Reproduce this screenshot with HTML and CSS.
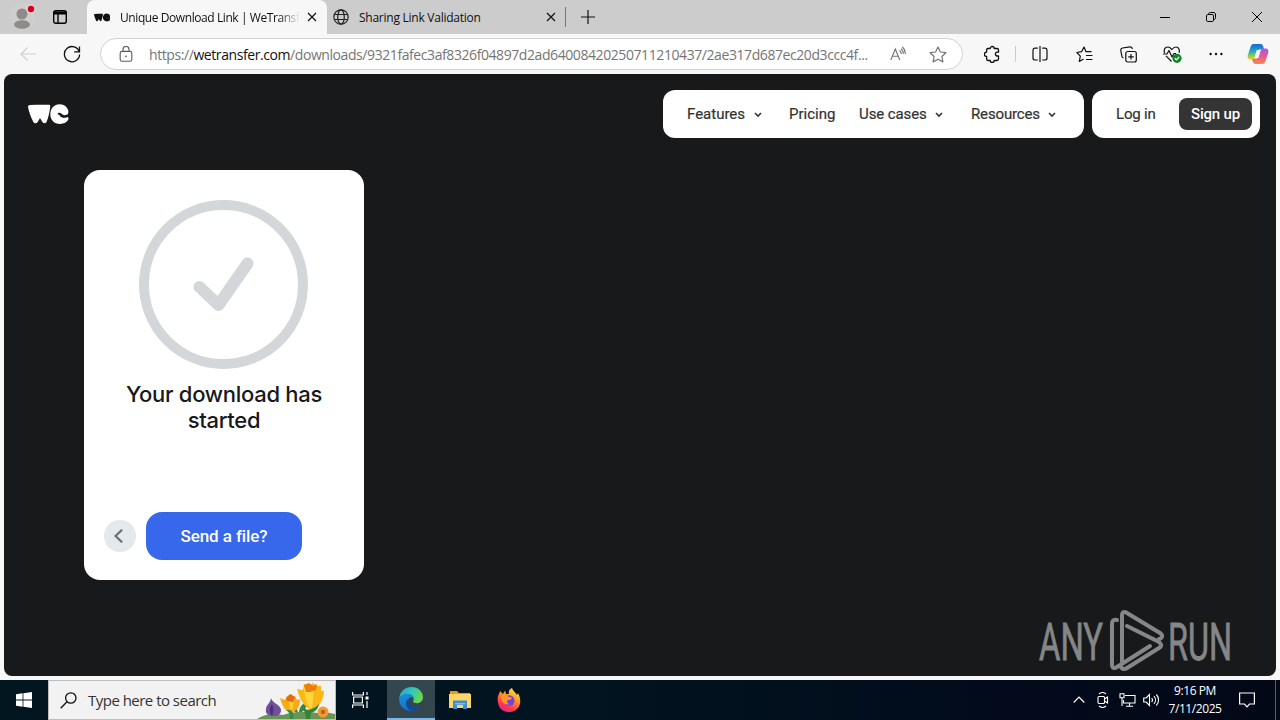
FILE: index.html
```html
<!DOCTYPE html>
<html lang="en">
<head>
    <meta charset="UTF-8">
    <meta name="viewport" content="width=device-width, initial-scale=1.0">
    <title>Unique Download Link | WeTransfer</title>
    <link rel="stylesheet" href="styles.css">
</head>
<body>
    <div class="tabs">
        <div class="profile">
            <svg width="28" height="28" viewBox="0 0 28 28"><circle cx="14" cy="13" r="13" fill="#d0cecc"/><circle cx="14" cy="11" r="5.500" fill="#8e8b88"/><ellipse cx="14" cy="21.500" rx="8" ry="4.300" fill="#8e8b88"/><circle cx="23" cy="6" r="4.500" fill="#e4d4d4"/><circle cx="23" cy="6" r="3.200" fill="#d0021b"/></svg>
        </div>
        <div class="workspace">
            <svg width="16" height="16" viewBox="0 0 16 16" fill="none" stroke="#000" stroke-width="1.400"><rect x="1.700" y="1.700" width="12.600" height="12.600" rx="2"/><path d="M2 4h12" stroke-width="3"/><path d="M6 5v9"/></svg>
        </div>
        <div class="tab active">
            <svg class="favicon" width="16" height="9" viewBox="0 0 40 20" fill="#111"><use href="#we"/></svg>
            <span class="title fade">Unique Download Link | WeTransf</span>
            <svg class="close" width="10" height="10" viewBox="0 0 10 10" stroke="#111" stroke-width="1.200"><path d="M1 1l8 8M9 1L1 9"/></svg>
        </div>
        <div class="tab">
            <svg class="globe" width="16" height="16" viewBox="0 0 16 16" fill="none" stroke="#222" stroke-width="1.200"><circle cx="8" cy="8" r="7.200"/><ellipse cx="8" cy="8" rx="3.300" ry="7.200"/><path d="M1.500 5.500h13M1.500 10.500h13"/></svg>
            <span class="title">Sharing Link Validation</span>
            <svg class="close" width="10" height="10" viewBox="0 0 10 10" stroke="#111" stroke-width="1.200"><path d="M1 1l8 8M9 1L1 9"/></svg>
        </div>
        <div class="newtab">
            <svg width="14" height="14" viewBox="0 0 14 14" stroke="#111" stroke-width="1.200"><path d="M7 0v14M0 7h14"/></svg>
        </div>
        <div class="winbtns">
            <div><svg width="10" height="10" viewBox="0 0 10 10" stroke="#000"><path d="M0 5.500h10"/></svg></div>
            <div><svg width="10" height="10" viewBox="0 0 10 10" fill="none" stroke="#000"><rect x=".5" y="2.500" width="7" height="7" rx="1.300"/><path d="M2.500 2.500C2.500 1 3 .5 4.500 .5H7C9 .5 9.500 1 9.500 3v2.500c0 1.500-.5 2-2 2"/></svg></div>
            <div><svg width="10" height="10" viewBox="0 0 10 10" stroke="#000"><path d="M0 0l10 10M10 0L0 10"/></svg></div>
        </div>
    </div>

    <div class="toolbar">
        <div class="tool"><svg width="16" height="14" viewBox="0 0 16 14" fill="none" stroke="#cfcfcf" stroke-width="1.200"><path d="M16 7H1M7.500 .5L1 7l6.500 6.500"/></svg></div>
        <div class="tool"><svg width="18" height="18" viewBox="0 0 18 18" fill="none" stroke="#111" stroke-width="1.300"><path d="M16.300 7A7.600 7.600 0 1 0 16.600 9.500M16.500 1.500v5.300h-5.300"/></svg></div>
        <div class="address">
            <svg class="lock" width="14" height="16" viewBox="0 0 14 16" fill="none" stroke="#5b5b5b" stroke-width="1.100"><rect x="1.200" y="5.400" width="11.600" height="9.800" rx="1.800"/><path d="M4 5.400V3.500a3 3 0 0 1 6 0v1.900"/><circle cx="7" cy="10.300" r=".6" fill="#5b5b5b" stroke-width=".6"/></svg>
            <span class="url">https://<b>wetransfer.com</b>/downloads/9321fafec3af8326f04897d2ad64008420250711210437/2ae317d687ec20d3ccc4f...</span>
            <svg class="read" width="16" height="16" viewBox="0 0 16 16" fill="none" stroke="#747474" stroke-width="1.100"><path d="M.8 14L5.300 3l4.500 11M2.300 10.300h6M9.500 4.500c1.300 1 1.800 2 1.800 3.500M11 2.700c1.600 1.300 2.400 3 2.300 5.300M12.300 1c2 1.600 3.100 4 3 7"/></svg>
            <svg class="star" width="18" height="17" viewBox="0 0 18 17" fill="none" stroke="#747474" stroke-width="1.200" stroke-linejoin="round"><path d="M9 1l2.400 5 5.500.700-4 3.800 1 5.400L9 13.300l-4.900 2.600 1-5.400-4-3.800 5.500-.7z"/></svg>
        </div>
        <div class="tool ext"><svg width="16" height="18" viewBox="0 0 16 18" fill="none" stroke="#111" stroke-width="1.300" stroke-linejoin="round"><path d="M4 3.500h2.200a2 2 0 0 1 4 0H13a1.500 1.500 0 0 1 1.500 1.500v2.200h-1.200a1.900 1.900 0 0 0 0 3.800h1.200V14a1.500 1.500 0 0 1-1.500 1.500h-2.800a2 2 0 0 1-4 0H4A1.500 1.500 0 0 1 2.600 14v-2.500a2.200 2.200 0 0 1 0-4.400V5A1.500 1.500 0 0 1 4 3.500z"/></svg></div>
        <div class="line"></div>
        <div class="tool"><svg width="16" height="16" viewBox="0 0 16 16" fill="none" stroke="#111" stroke-width="1.200"><path d="M5.800 2.100H3A2 2 0 0 0 1 4v8a2 2 0 0 0 2 2h2.800M10.200 2.100H13A2 2 0 0 1 15 4v8a2 2 0 0 1-2 2h-2.800M8 0v16"/></svg></div>
        <div class="tool"><svg width="17" height="17" viewBox="0 0 17 17" fill="none" stroke="#111" stroke-width="1.200" stroke-linejoin="round"><path d="M15.500 5.700H10L8 1 5.600 5.700.8 6.500l3.500 3.600-1 5.400L7.500 13M10 9.500h6.500M10 13.500h6.500"/></svg></div>
        <div class="tool"><svg width="17" height="17" viewBox="0 0 17 17" fill="none" stroke="#111" stroke-width="1.200"><rect x="5.800" y="5.500" width="10.500" height="10.500" rx="2"/><path d="M11 8v5.500M8.300 10.800h5.500M3.500 12C2.300 11.800 2 11.200 1.800 10L.8 4.500C.6 3 1.200 2.200 2.500 2L10 .8c1.500-.2 2.100.4 2.400 2.200"/></svg></div>
        <div class="tool health"><svg width="19" height="17" viewBox="0 0 19 17" fill="none" stroke="#111" stroke-width="1.200" stroke-linejoin="round"><path d="M1.600 7C.5 4.500 1.500 1 4.800 1 7 1 8 2.500 8.800 3.500 9.600 2.500 11 1 13 1c3 0 4 3.300 3 5.800M3 9.800l5.500 5.700M0 8h4l2-3.500L9 11l2-3.500h2"/><circle cx="14" cy="12.300" r="4.600" fill="#15852c" stroke="none"/><path d="M11.800 12.300l1.600 1.500 2.800-3" stroke="#fff"/></svg></div>
        <div class="tool"><svg width="14" height="4" viewBox="0 0 14 4" fill="#111"><circle cx="1.600" cy="2" r="1.200"/><circle cx="7" cy="2" r="1.200"/><circle cx="12.400" cy="2" r="1.200"/></svg></div>
        <div class="copilot">
            <svg width="22" height="20" viewBox="0 0 22 20">
                <defs>
                    <linearGradient id="cpA" x1="0" y1="0" x2="0" y2="1"><stop offset="0" stop-color="#1769d8"/><stop offset=".45" stop-color="#21a4c9"/><stop offset=".75" stop-color="#8fca4c"/><stop offset="1" stop-color="#f2cf2d"/></linearGradient>
                    <linearGradient id="cpB" x1="0" y1="0" x2="0" y2="1"><stop offset="0" stop-color="#a35be0"/><stop offset=".5" stop-color="#e4589f"/><stop offset="1" stop-color="#fb8a3c"/></linearGradient>
                </defs>
                <path d="M6.500 0h7c2 0 2.500 1.500 3 3.500l.5 1.500h-3c-2 0-2.500 1-3 2.500l-2 6C8.500 15 7.500 15.500 6 15.500H3.500C1 15.500 0 13.500.8 11L3.500 3C4.200 1 5 0 6.500 0z" fill="url(#cpA)"/>
                <path d="M15.500 20h-7c-2 0-2.500-1.500-3-3.500L5 15h3c2 0 2.500-1 3-2.500l2-6c.5-1.500 1.500-2 3-2h2.500C21 4.500 22 6.500 21.200 9l-2.700 8c-.7 2-1.500 3-3 3z" fill="url(#cpB)"/>
                <path d="M9.700 6h4.200l-2.500 8H7.300z" fill="#f7f7f7"/>
            </svg>
        </div>
    </div>

    <div class="frame">
        <div class="page">
            <header>
                <svg class="logo" width="41" height="20" viewBox="0 0 41 20" fill="#fff">
                    <g id="we">
                        <path d="M2 1C9 .6 15 .6 20.800.7c1.300 0 1.700.9 1.400 2.200-.6 5.200-1.800 10.500-3.600 14.800-.8 1.900-3.400 1.900-4.400.1L12 14l-2.300 4c-.9 1.600-3.400 1.600-4.300-.1C3 13.200 1 8 .1 3.400-.2 1.900.6 1.100 2 1z"/>
                        <path d="M31.500.2c5 0 8.900 3.500 8.900 7.600 0 3-1.800 4.900-4.500 4.900-2 0-3.300-.9-4-2.300-.3 2 1.400 3.100 3.700 2.900 1.300-.1 2.700-.6 3.600-.4 1.600.3 1.700 2 .7 3.400-1.500 2.200-4.200 3.600-7.800 3.600-6 0-9.800-3.900-9.800-9.700 0-5.800 3.900-10 9.200-10z"/>
                        <path d="M29.500 10c.6-1.400 2.600-1.700 3.900-.5 1.600 2 3.600 2.300 6 .7l.8 2c-2.400 2-5.300 2-7.400 0-1-.9-2.200-1.500-3.300-2.200z" class="eye"/>
                    </g>
                </svg>
                <nav>
                    <a class="features">Features <svg width="8" height="6" viewBox="0 0 8 6"><path d="M1 1l3 3 3-3"/></svg></a>
                    <a class="pricing">Pricing</a>
                    <a class="cases">Use cases <svg width="8" height="6" viewBox="0 0 8 6"><path d="M1 1l3 3 3-3"/></svg></a>
                    <a class="resources">Resources <svg width="8" height="6" viewBox="0 0 8 6"><path d="M1 1l3 3 3-3"/></svg></a>
                </nav>
                <div class="account">
                    <a class="login">Log in</a>
                    <a class="signup">Sign up</a>
                </div>
            </header>

            <div class="card">
                <svg class="done" width="170" height="170" viewBox="0 0 170 170" fill="none" stroke="#d4d7da"><circle cx="84.500" cy="84.500" r="79.500" stroke-width="10"/><path d="M60.500 87L79.500 105L108.500 63.500" stroke-width="12" stroke-linecap="round" stroke-linejoin="round"/></svg>
                <h2>Your download has<br>started</h2>
                <div class="actions">
                    <button class="back"><svg width="9" height="14" viewBox="0 0 9 14" fill="none" stroke="#6a6d70" stroke-width="2.200" stroke-linecap="round"><path d="M7.500 1.300L1.500 7l6 5.700"/></svg></button>
                    <button class="send">Send a file?</button>
                </div>
            </div>
        </div>
    </div>

    <svg class="watermark" width="210" height="66" viewBox="0 0 210 66">
        <text x="2" y="53" textLength="64" lengthAdjust="spacingAndGlyphs">ANY</text>
        <text x="131" y="53" textLength="64" lengthAdjust="spacingAndGlyphs">RUN</text>
        <path d="M80 13c-4-1-5 1-5 5v39c0 4 2 5 5 3l33-21M85 55V9c0-4 2-5 5-3l33 20c3 2 3 5-1 6M90 19l32 16c3 3 3 4 0 6L90 61c-3 2-5 1-6-1"/>
    </svg>

    <div class="taskbar">
        <div class="start"><svg width="16" height="16" viewBox="0 0 16 16" fill="#fff"><path d="M0 2.200L6.600 1.300v6.200H0zM7.400 1.200L16 0v7.500H7.400zM0 8.400h6.600v6.300L0 13.800zM7.400 8.400H16V16l-8.600-1.200z"/></svg></div>
        <div class="search">
            <svg class="glass" width="17" height="17" viewBox="0 0 17 17" fill="none" stroke="#111" stroke-width="1.300"><circle cx="10.800" cy="6" r="5.200"/><path d="M7 9.800L.7 16.300"/></svg>
            <span>Type here to search</span>
            <svg class="flowers" width="80" height="38" viewBox="0 0 80 38">
                <path d="M2 38C10 33 18 32 28 34c12-4 26-3 34-2 8-1 14 0 18 1v5z" fill="#6a9357"/>
                <path d="M43 32C42 25 38 21 34 20c1 8 4 11 9 12zM44 32c0-6 3-9 8-11 0 6-3 10-8 11z" fill="#3c8a3c"/>
                <path d="M16 17c1 5 10 7 10 12 0 5-4 6-8 6s-8-2-7-7c0-4 4-5 5-11z" fill="#71509b"/><path d="M17 23c2 4 2 8 0 12-3-3-3-8 0-12z" fill="#4b3277"/>
                <path d="M25 17l5 2 2-4 4 2 4-2 2 4 3-1c0 7-3 13-9 13s-9-7-11-14z" fill="#f7a916"/><path d="M33 15l4-2 2 4-2 13c-3-4-4-9-4-15z" fill="#ffcf38"/><path d="M31 17l4-4 5 3-2 5-6-1z" fill="#e26b12"/>
                <path d="M35 29c3 1 4 4 3 9h-3c0-4 0-6-4-9z" fill="#3c8a3c"/>
                <path d="M42 8l6 1 1-6 5 2 4-3 4 3 4 0 0 5 3 0c0 8-5 17-11 19-8-1-13-10-16-21z" fill="#fab816"/><path d="M49 7l4-4 6 6-2 20c-6-5-7-13-8-22z" fill="#ffd43d"/><path d="M49 4l5-2 4 3 4-2-1 6-6 2-4 0z" fill="#ed7c12"/>
                <path d="M46 24c4 4 6 6 10 4 4-1 6-3 8-5-1 6-5 8-8 9l-1 6h-4c0-6-2-8-5-14z" fill="#338438"/>
                <circle cx="68" cy="31" r="5.500" fill="#f39b2c"/><circle cx="68" cy="31" r="2.200" fill="#bd5f28"/>
            </svg>
        </div>
        <div class="app"><svg width="17" height="16" viewBox="0 0 17 16" fill="none" stroke="#fff" stroke-width="1.200"><path d="M.6 0v3h10.800V0M.6 16v-3h10.800v3M1.600 5h8.800v6H1.600zM15 0v3M15 9v7"/><path d="M13.500 4.500h3v3h-3z" fill="#fff" stroke="none"/></svg></div>
        <div class="app edge">
            <svg width="24" height="24" viewBox="0 0 24 24">
                <defs>
                    <linearGradient id="edgeA" x1="0" y1="0" x2="1" y2=".4"><stop offset="0" stop-color="#279fd3"/><stop offset=".55" stop-color="#31c6ba"/><stop offset="1" stop-color="#66d84d"/></linearGradient>
                    <linearGradient id="edgeB" x1="0" y1="0" x2=".7" y2="1"><stop offset="0" stop-color="#1a93dc"/><stop offset="1" stop-color="#1169c3"/></linearGradient>
                </defs>
                <path d="M.2 11C1 4.500 6 0 12.300 0 19.500 0 24 5 24 10.200c0 3.600-2.800 6-6.200 6-3 0-4.500-1.200-3.400-2.600 1.200-2-.5-5.600-4-5.600C5.500 7 2 8.500.2 11z" fill="url(#edgeA)"/>
                <path d="M.1 11.500C1.500 8.500 5 6.500 8.500 6.700c3.500 0 6 2 6.300 4.500-1.200-1.500-4-1.500-5.300.8-1.800 3.700 1 8 5.300 8.300 2.500.2 4.700-.5 6.800-1.700C19.500 22 16 24 12 24 5 24-.4 18.300.1 11.500z" fill="url(#edgeB)"/>
                <path d="M9.300 12c-4 2.500-2.500 9 2.500 11.800 4 .2 7.500-1.500 9.800-5.200-6 3.400-12.700.9-12.300-6.600z" fill="#124a9b"/>
            </svg>
        </div>
        <div class="app"><svg width="22" height="20" viewBox="0 0 22 20"><path d="M1 1h7l2 2h11v4H1z" fill="#e39a18"/><path d="M0 4h22v14H0z" fill="#fbd568"/><path d="M4 10.500h14V19h-4v-4H8v4H4z" fill="#3f8fd0"/><path d="M6 13h10v1.500H6z" fill="#78bdea"/></svg></div>
        <div class="app">
            <svg width="24" height="24" viewBox="0 0 24 24">
                <defs><linearGradient id="fox" x1=".8" y1="0" x2=".3" y2="1"><stop offset="0" stop-color="#fff04a"/><stop offset=".4" stop-color="#ff9722"/><stop offset=".75" stop-color="#ff3850"/><stop offset="1" stop-color="#e0208d"/></linearGradient></defs>
                <path d="M2 6l1-3 3 3 2-3.500 1 3.500h3c-1-3 1-5 3-6 1 3 3 4 5 7l1-2c3 6 3 11 0 15-5 6-14 5-18 0C0 15 0 9 2 6z" fill="url(#fox)"/>
                <circle cx="12.300" cy="12.500" r="5.200" fill="#7543d8"/><path d="M4 8c3-2 6-1 8 1 2 0 3 1 3 1-1 2-3 2-4 2-2 1-1 4 2 4-5 2-10-3-9-8z" fill="#ff9528"/>
            </svg>
        </div>
        <div class="tray">
            <div><svg width="12" height="8" viewBox="0 0 12 8" fill="none" stroke="#fff" stroke-width="1.200"><path d="M.7 6.500L6 1.200l5.300 5.300"/></svg></div>
            <div><svg width="12" height="16" viewBox="0 0 12 16" fill="none" stroke="#fff" stroke-width="1.100"><rect x="1" y="4.500" width="6.500" height="7" rx="1"/><path d="M7.500 7l3-2v6l-3-2M2 2c2-1.700 5-1.700 7 0M2 14c2 1.700 5 1.700 7 0"/></svg></div>
            <div><svg width="17" height="14" viewBox="0 0 17 14" fill="none" stroke="#fff" stroke-width="1.100"><path d="M6 2.500h10v7.500H4.500V7M10.500 10v3M7 13.300h7M1 .8h4v4H1zM3 5v8"/></svg></div>
            <div><svg width="17" height="14" viewBox="0 0 17 14" fill="none" stroke="#fff" stroke-width="1.100"><path d="M.7 5h2.500L6.500 1.500v11L3.200 9H.7zM8.700 5c1 1.200 1 2.800 0 4M11 3.200c2 2.200 2 5.400 0 7.600M13.300 1.500c3 3 3 8 0 11"/></svg></div>
            <div class="clock"><span>9:16 PM</span><span class="date">7/11/2025</span></div>
            <div class="note"><svg width="16" height="16" viewBox="0 0 16 16" fill="none" stroke="#fff" stroke-width="1.200"><path d="M.6 1h14.800v11h-4.900L8 14.800 5.500 12H.6z"/></svg></div>
            <div class="peek"></div>
        </div>
    </div>
</body>
</html>
```
FILE: styles.css
```css
* {margin: 0; padding: 0; box-sizing: border-box;}
body {width: 1280px; height: 720px; overflow: hidden; background: #f7f7f7; font-family: "Open Sans", "Noto Sans", sans-serif; font-size: 12px; color: #111;}
svg {display: block; flex: none;}

/* tab strip */
.tabs {display: flex; align-items: center; height: 34px; background: #ccc;}
.profile {width: 44px; padding-left: 8px;}
.workspace {width: 43px; padding-left: 8px;}
.tab {display: flex; align-items: center; width: 239px; height: 34px; padding-left: 6px;}
.tab.active {width: 240px; padding-left: 7px; background: #f7f7f7; border-radius: 8px 8px 0 0;}
.tab .title {width: 180px; margin-left: 10px; white-space: nowrap; letter-spacing: -0.25px;}
.tab .close {margin-left: 7px;}
.tab.active .title {letter-spacing: -0.42px;}
.fade {-webkit-mask-image: linear-gradient(90deg, #000 88%, transparent 100%); mask-image: linear-gradient(90deg, #000 88%, transparent 100%);}
.newtab {height: 20px; padding: 3px 0 0 15px; border-left: 1px solid #777; margin-left: -1px;}
.winbtns {display: flex; margin-left: auto;}
.winbtns div {width: 46px; display: flex; justify-content: center;}

/* toolbar */
.toolbar {display: flex; align-items: center; height: 40px; padding-left: 6px; background: #f7f7f7;}
.tool {display: flex; justify-content: center; width: 44px; flex: none;}
.tool.ext {margin-left: 7px;}
.line {width: 1px; height: 16px; margin: 0 2px 0 1px; background: #ccc;}
.copilot {display: flex; justify-content: center; width: 40px;}
.address {display: flex; align-items: center; width: 863px; height: 32px; margin-left: 6px; padding-left: 18px; background: #fff; border: 1px solid #d2d2d2; border-radius: 16px; flex: none;}
.url {width: 722px; margin-left: 16px; font-size: 14px; color: #757575; white-space: nowrap; letter-spacing: -0.42px;}
.url b {font-weight: normal; color: #111;}
.address .read {margin-left: 19px;}
.address .star {margin-left: 23px;}

/* web page */
.frame {height: 606px; padding: 0 4px 4px; background: #f7f7f7;}
.page {height: 602px; padding: 16px 16px 0 24px; background: #17191b; border-radius: 8px;}
header {display: flex; height: 48px; font: 15px Roboto, sans-serif; color: #333;}
.logo {margin: 14px auto 0 0;}
.eye {fill: #17191b;}
.favicon .eye {fill: #f7f7f7;}
nav, .account {display: flex; align-items: center; height: 48px; background: #fff; border-radius: 12px;}
nav {width: 421px; padding-left: 24px; margin-right: 8px;}
nav a {display: flex; align-items: center; justify-content: space-between; white-space: nowrap; -webkit-text-stroke: 0.2px #333;}
nav svg {fill: none; stroke: #333; stroke-width: 1.6; margin-top: 2px;}
.features {width: 75px; margin-right: 27px;}
.pricing {width: 46px; margin-right: 24px;}
.cases {width: 84px; margin-right: 28px; letter-spacing: -0.1px;}
.resources {width: 85px; letter-spacing: -0.15px;}
.account {width: 168px; padding: 0 8px 0 24px; justify-content: space-between;}
.login {-webkit-text-stroke: 0.2px #333; letter-spacing: -0.2px;}
.signup {width: 73px; height: 32px; line-height: 32px; text-align: center; background: #343434; color: #fff; border-radius: 8px; font-weight: 500; letter-spacing: -0.2px;}
.card {display: flex; flex-direction: column; align-items: center; width: 280px; height: 410px; margin: 32px 0 0 56px; padding: 30px 20px 20px; background: #fff; border-radius: 16px;}
.card h2 {margin-top: 11px; font: 500 22px/26px Inter, sans-serif; letter-spacing: -0.28px; color: #17191b; text-align: center; white-space: nowrap;}
.actions {display: flex; align-items: center; gap: 10px; margin-top: auto; align-self: flex-start;}
.actions button {border: 0;}
.back {display: flex; align-items: center; justify-content: center; width: 32px; height: 32px; padding-right: 3px; background: #e4e9ee; border-radius: 50%;}
.send {width: 156px; height: 48px; background: #3767ea; color: #fff; border-radius: 16px; font: 500 17px Roboto, sans-serif; letter-spacing: -0.1px;}

.watermark {position: absolute; left: 1037px; top: 607px;}
.watermark text {font: 52px Roboto, sans-serif; fill: #858687; stroke: #858687; stroke-width: 0.8px;}
.watermark path {fill: none; stroke: #858687; stroke-width: 4px; stroke-linecap: round;}

/* taskbar */
.taskbar {display: flex; height: 40px; background: linear-gradient(90deg, #02161f 0, #01141f 45%, #020a1b 80%, #030817 100%);}
.start, .app {display: flex; align-items: center; justify-content: center; width: 48px; height: 40px;}
.app + .app {margin-left: 1px;}
.app.edge {margin-left: 3px; background: #34474f; border-bottom: 2px solid #76b9ed;}
.search {display: flex; align-items: center; width: 288px; background: #f2f2f2; border: 1px solid #bcbcbc;}
.glass {margin-left: 11px;}
.search span {width: 165px; margin-left: 11px; font-size: 15px; letter-spacing: -0.52px; color: #333; white-space: nowrap;}
.flowers {margin-left: auto; align-self: flex-end;}
.tray {display: flex; margin-left: auto; color: #fff;}
.tray div {display: flex; align-items: center; justify-content: center; width: 24px;}
.tray .clock {flex-direction: column; width: 64px; line-height: 18px; letter-spacing: -0.42px;}
.tray .note {width: 40px;}
.tray .peek {width: 5px; margin-left: 8px; border-left: 1px solid #555d68;}
```
